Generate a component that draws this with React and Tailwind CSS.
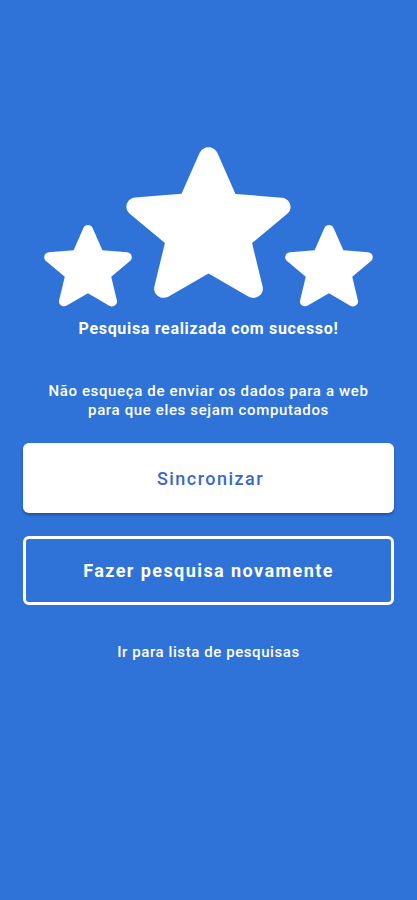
import React from 'react';

// rounded material star, viewBox trimmed to its bounds
const STAR =
  'M12 17.27l4.15 2.51c.76.46 1.69-.22 1.49-1.08l-1.1-4.72 3.67-3.18c.67-.58.31-1.68-.57-1.75l-4.83-.41-1.89-4.46c-.34-.81-1.5-.81-1.84 0L9.19 8.63l-4.83.41c-.88.07-1.24 1.17-.57 1.75l3.67 3.18-1.1 4.72c-.2.86.73 1.54 1.49 1.08l4.15-2.5z';

const Star = ({ className }) => (
  <svg viewBox="3.4 3.55 17.2 16.5" className={className} fill="white" preserveAspectRatio="none">
    <path d={STAR} />
  </svg>
);

export default function App() {
  return (
    <div
      className="w-[417px] h-[900px] bg-[#2f73d9] text-white flex flex-col items-center"
      style={{ fontFamily: 'Roboto, "Liberation Sans", sans-serif' }}
    >
      <div className="flex justify-center mt-[147px]">
        <Star className="w-[88px] h-[82px] mt-[78px]" />
        <Star className="w-[165px] h-[152px] -mx-[6px]" />
        <Star className="w-[88px] h-[82px] mt-[78px]" />
      </div>

      <p className="mt-[12px] text-[16px] font-bold leading-[20px] tracking-[0.68px]">
        Pesquisa realizada com sucesso!
      </p>

      <p className="mt-[43px] text-[15px] font-medium leading-[19px] tracking-[0.64px] text-center">
        Não esqueça de enviar os dados para a web
        <br />
        para que eles sejam computados
      </p>

      <div className="w-full px-[23px] mt-[23px] flex flex-col gap-[23px]">
        <button className="h-[70px] w-full rounded-[6px] bg-white shadow-[0_2px_3px_rgba(0,0,0,0.3)] text-[#3a67cc] text-[18px] font-medium tracking-[1.47px] pl-[4px]">
          Sincronizar
        </button>
        <button className="h-[69px] w-full rounded-[6px] border-[3px] border-white text-white text-[18px] font-bold tracking-[1.43px]">
          Fazer pesquisa novamente
        </button>
      </div>

      <p className="mt-[37px] text-[15px] font-medium leading-[20px] tracking-[0.58px]">Ir para lista de pesquisas</p>
    </div>
  );
}
